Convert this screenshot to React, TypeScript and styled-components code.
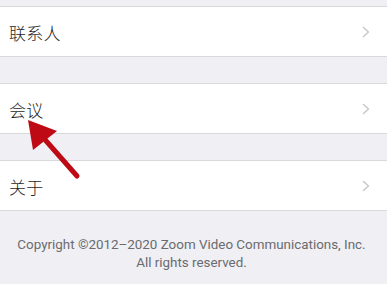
import React from "react";
import styled, { createGlobalStyle } from "styled-components";

const Global = createGlobalStyle`
  html, body { margin: 0; padding: 0; background: #efeff4; }
  body { font-family: "Noto Sans CJK SC", Roboto, sans-serif; }
`;

const Page = styled.div`
  position: relative;
  width: 387px;
  height: 284px;
  overflow: hidden;
  background: #efeff4;
  display: flex;
  flex-direction: column;
  padding-top: 6px;
  box-sizing: border-box;
`;

const Section = styled.div`
  background: #fff;
  border-top: 1px solid #d9d9dc;
  border-bottom: 1px solid #d9d9dc;
  margin-bottom: 26px;
`;

const Row = styled.div`
  height: 49px;
  display: flex;
  align-items: center;
  justify-content: space-between;
  padding: 0 17px 0 9px;
`;

const Label = styled.span`
  font-family: "Noto Sans CJK SC", sans-serif;
  font-size: 17px;
  font-weight: 300;
  color: #1e1e1e;
  letter-spacing: 0.3px;
  margin-top: 1px;
`;

const Footer = styled.div`
  margin-top: -1px;
  padding-right: 4px;
  text-align: center;
  font-family: Roboto, "Liberation Sans", sans-serif;
  font-size: 13.4px;
  line-height: 18px;
  color: #6b6b6e;
`;

const Arrow = styled.svg`
  position: absolute;
  left: 0;
  top: 0;
  pointer-events: none;
`;

const Chevron = () => (
  <svg width="8" height="12" viewBox="0 0 8 12">
    <path d="M1.5 1.5 L6.5 6 L1.5 10.5" fill="none" stroke="#c8c8cc" strokeWidth="1.5" strokeLinecap="round" strokeLinejoin="round" />
  </svg>
);

const items = ["联系人", "会议", "关于"];

export default function App() {
  return (
    <>
      <Global />
      <Page>
        {items.map((t) => (
          <Section key={t}>
            <Row>
              <Label>{t}</Label>
              <Chevron />
            </Row>
          </Section>
        ))}
        <Footer>
          Copyright ©2012–2020 Zoom Video Communications, Inc.
          <br />
          All rights reserved.
        </Footer>
        <Arrow width="387" height="284" viewBox="0 0 387 284">
          <line x1="40" y1="134" x2="77" y2="176" stroke="#bd0a14" strokeWidth="5" strokeLinecap="round" />
          <polygon points="28,120 57,131 33,150" fill="#bd0a14" />
        </Arrow>
      </Page>
    </>
  );
}
